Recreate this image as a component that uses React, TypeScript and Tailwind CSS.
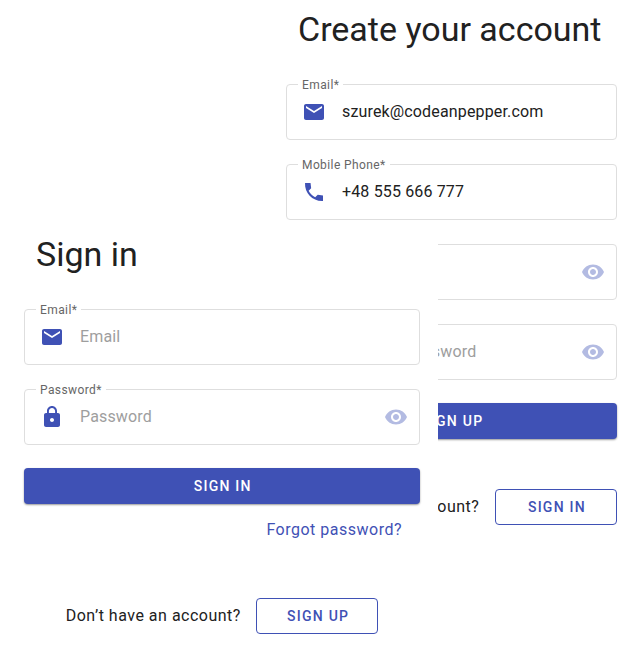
import type { ReactNode } from "react";

const paths = {
  mail: "M20 4H4c-1.1 0-1.99.9-1.99 2L2 18c0 1.1.9 2 2 2h16c1.1 0 2-.9 2-2V6c0-1.1-.9-2-2-2zm0 4l-8 5-8-5V6l8 5 8-5v2z",
  phone: "M21 15.46l-5.27-.61-2.52 2.52c-2.83-1.44-5.15-3.75-6.59-6.59l2.53-2.53L8.54 3H3.03C2.45 13.18 10.82 21.55 21 20.97v-5.51z",
  lock: "M18 8h-1V6c0-2.76-2.24-5-5-5S7 3.24 7 6v2H6c-1.1 0-2 .9-2 2v10c0 1.1.9 2 2 2h12c1.1 0 2-.9 2-2V10c0-1.1-.9-2-2-2zm-6 9c-1.1 0-2-.9-2-2s.9-2 2-2 2 .9 2 2-.9 2-2 2zm3.1-9H8.9V6c0-1.71 1.39-3.1 3.1-3.1 1.71 0 3.1 1.39 3.1 3.1v2z",
  eye: "M12 4.5C7 4.5 2.73 7.61 1 12c1.73 4.39 6 7.5 11 7.5s9.27-3.11 11-7.5c-1.73-4.39-6-7.5-11-7.5zM12 17c-2.76 0-5-2.24-5-5s2.24-5 5-5 5 2.24 5 5-2.24 5-5 5zm0-8c-1.66 0-3 1.34-3 3s1.34 3 3 3 3-1.34 3-3-1.34-3-3-3z",
};

function Icon({ name, className = "" }: { name: keyof typeof paths; className?: string }) {
  return (
    <svg viewBox="0 0 24 24" className={`size-6 shrink-0 fill-current ${className}`}>
      <path d={paths[name]} />
    </svg>
  );
}

type FieldProps = {
  label: string;
  icon: keyof typeof paths;
  children: ReactNode;
  filled?: boolean;
  toggle?: boolean;
};

function Field({ label, icon, children, filled, toggle }: FieldProps) {
  return (
    <div className="relative flex h-14 items-center rounded border border-[#dedede] pr-[11px] pl-[15px]">
      <span className="absolute -top-2 left-[11px] bg-white px-1 text-xs leading-4 tracking-[0.4px] whitespace-nowrap text-[#666]">
        {label}
      </span>
      <Icon name={icon} className="text-[#3f51b5]" />
      <span className={`ml-4 flex-1 text-base leading-6 tracking-[0.15px] whitespace-nowrap ${filled ? "text-[#212121]" : "text-[#9e9e9e]"}`}>
        {children}
      </span>
      {toggle && <Icon name="eye" className="text-[#b3bbe2]" />}
    </div>
  );
}

function Primary({ children }: { children: ReactNode }) {
  return (
    <button className="h-9 w-full rounded bg-[#3f51b5] pl-[1.5px] text-sm font-medium tracking-[1.25px] text-white shadow-[0_1px_2px_rgba(0,0,0,0.4)]">
      {children}
    </button>
  );
}

function Outlined({ children }: { children: ReactNode }) {
  return (
    <button className="h-9 w-[122px] rounded border border-[#3f51b5] pl-[1.5px] text-sm font-medium tracking-[1.25px] text-[#3f51b5]">
      {children}
    </button>
  );
}

export default function App() {
  return (
    <main className="relative h-[671px] w-[627px] overflow-hidden bg-white font-['Roboto',sans-serif] text-[#212121]">
      <section className="ml-[286px] flex w-[331px] flex-col pt-[9px]">
        <h1 className="ml-3 text-[34px] leading-10 whitespace-nowrap">Create your account</h1>
        <div className="mt-[35px] flex flex-col gap-6">
          <Field label="Email*" icon="mail" filled>szurek@codeanpepper.com</Field>
          <Field label="Mobile Phone*" icon="phone" filled>+48 555 666 777</Field>
          <Field label="Password*" icon="lock" toggle>Password</Field>
          <Field label="Confirm Password*" icon="lock" toggle>Confirm Password</Field>
        </div>
        <div className="mt-[23px]"><Primary>SIGN UP</Primary></div>
        <div className="mt-[50px] flex items-center justify-end gap-4">
          <span className="text-base tracking-[0.5px] whitespace-nowrap">Already have an account?</span>
          <Outlined>SIGN IN</Outlined>
        </div>
      </section>

      {/* Sign-in sheet, stacked over the registration form */}
      <section className="absolute top-[230px] left-0 flex h-[441px] w-[438px] flex-col bg-white pt-1 pr-[18px] pl-6">
        <h1 className="ml-3 text-[34px] leading-10">Sign in</h1>
        <div className="mt-[35px] flex flex-col gap-6">
          <Field label="Email*" icon="mail">Email</Field>
          <Field label="Password*" icon="lock" toggle>Password</Field>
        </div>
        <div className="mt-[23px]"><Primary>SIGN IN</Primary></div>
        <a className="mt-[14px] mr-[18px] self-end text-base leading-6 tracking-[0.5px] text-[#3f51b5]">Forgot password?</a>
        <div className="mt-14 mr-[41.6px] flex items-center justify-end gap-[15.5px]">
          <span className="text-base tracking-[0.5px] whitespace-nowrap">Don’t have an account?</span>
          <Outlined>SIGN UP</Outlined>
        </div>
      </section>
    </main>
  );
}
